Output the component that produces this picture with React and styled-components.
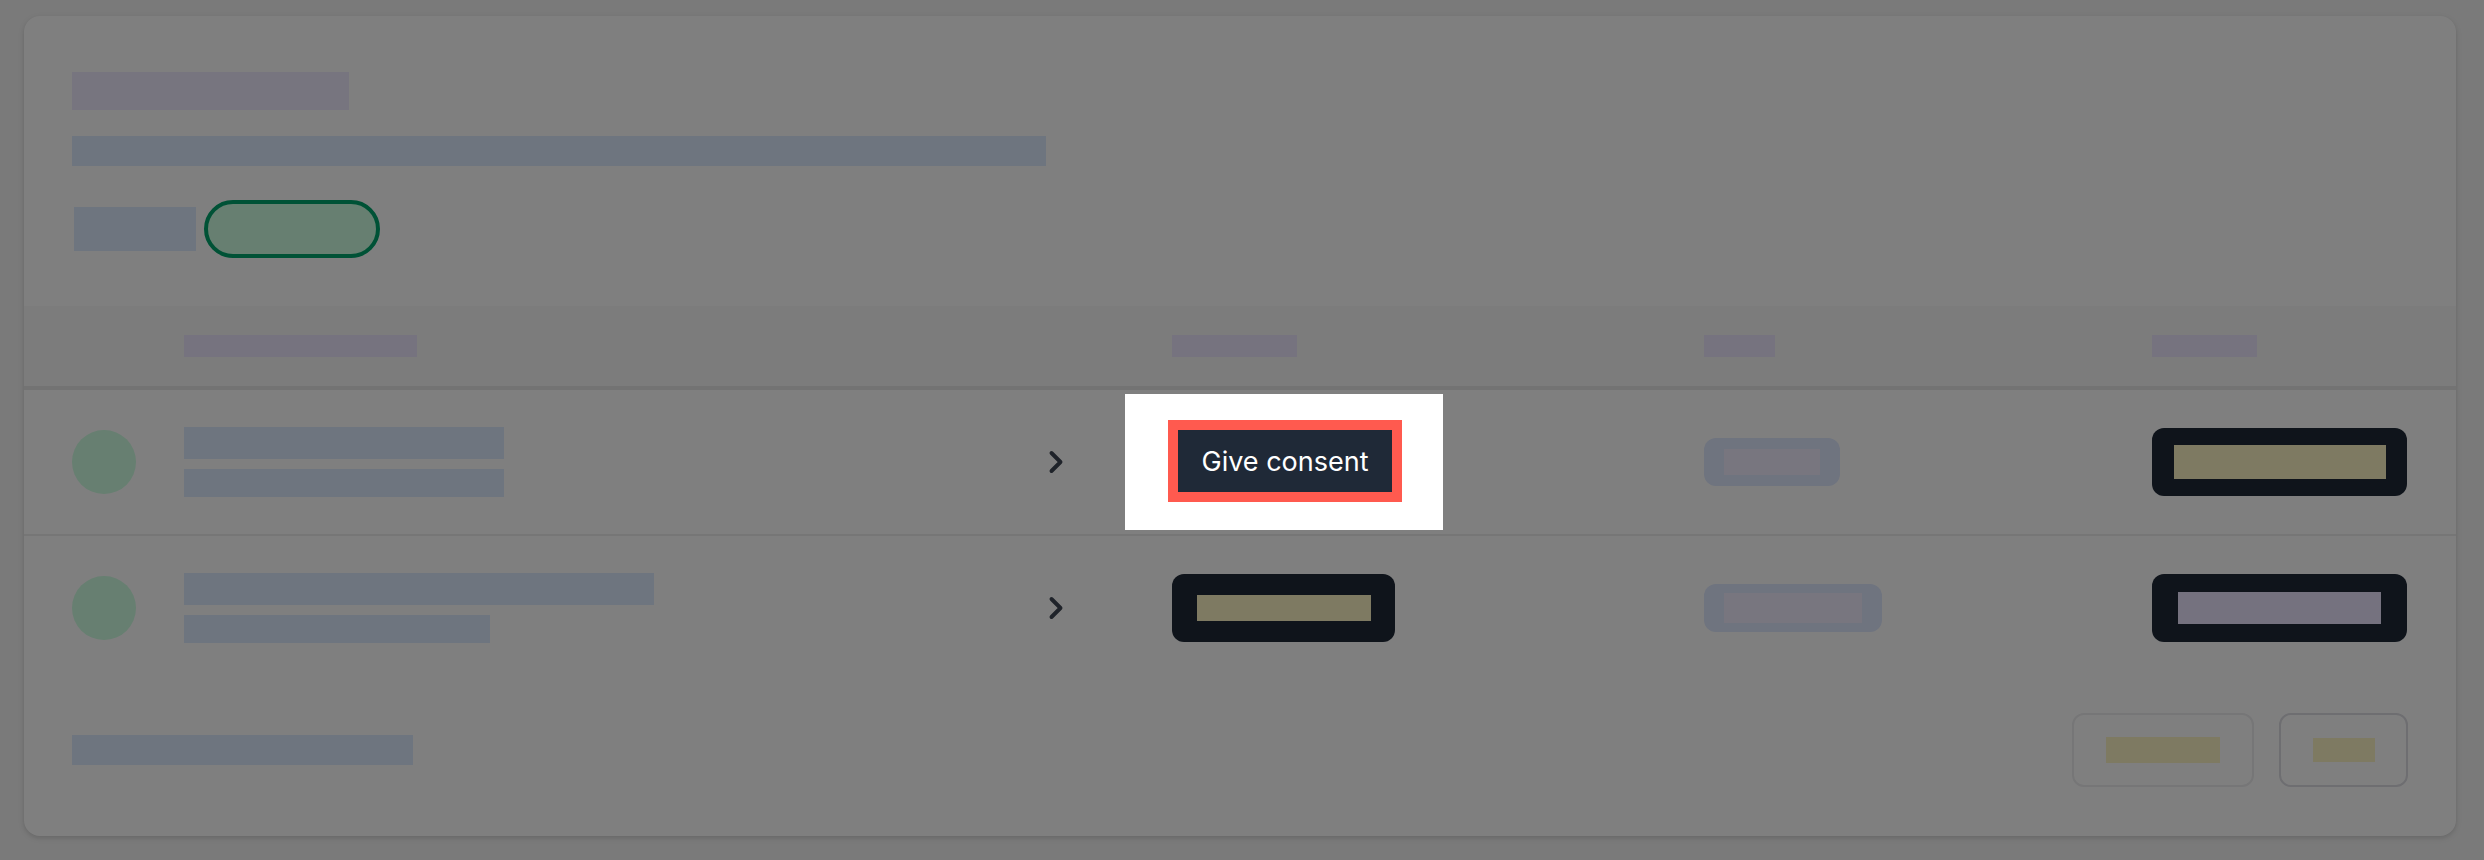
import React from "react";
import styled, { createGlobalStyle, css } from "styled-components";
import { ChevronRight } from "lucide-react";

const GlobalStyle = createGlobalStyle`
  * { box-sizing: border-box; }
  html, body {
    margin: 0;
    background: #f4f4f4;
    font-family: Inter, "Noto Sans", sans-serif;
  }
`;

const Page = styled.div`
  padding: 16px 28px 24px 24px;
  min-height: 860px;
`;

const Card = styled.section`
  background: #fff;
  border-radius: 16px;
  box-shadow: 0 2px 6px rgba(0, 0, 0, 0.1), 0 2px 4px rgba(0, 0, 0, 0.06);
`;

// redacted text is drawn as a flat block
const Redact = styled.span`
  display: block;
  flex-shrink: 0;
  width: ${({ $w }) => $w}px;
  height: ${({ $h }) => $h}px;
  background: ${({ $c }) => $c};
`;

const Top = styled.div`
  display: flex;
  flex-direction: column;
  align-items: flex-start;
  padding: 56px 48px 48px;
`;

const Subtitle = styled(Redact)`
  margin-top: 26px;
`;

const MetaRow = styled.div`
  display: flex;
  align-items: center;
  gap: 8px;
  margin-top: 34px;
`;

const MetaLabel = styled(Redact)`
  margin-left: 2px;
`;

const Pill = styled.span`
  display: block;
  width: 176px;
  height: 58px;
  border-radius: 999px;
  border: 4px solid #00a46c;
  background: #cefee2;
`;

const gridCols = css`
  display: grid;
  grid-template-columns: 112px 854px 134px 532px 448px 1fr;
  align-items: center;
  padding: 0 48px;
`;

const HeadRow = styled.div`
  ${gridCols};
  height: 84px;
  background: #f8f8f8;
  border-bottom: 4px solid #e6e6e6;
`;

const Row = styled.div`
  ${gridCols};
  height: ${({ $last }) => ($last ? 144 : 146)}px;
  border-bottom: ${({ $last }) => ($last ? "none" : "2px solid #ededed")};
`;

const Avatar = styled.span`
  display: block;
  width: 64px;
  height: 64px;
  border-radius: 50%;
  background: #cefee2;
`;

const NameCell = styled.div`
  display: flex;
  flex-direction: column;
  gap: 10px;
`;

const Chevron = styled(ChevronRight)`
  display: block;
  color: #3f4754;
`;

const DarkButton = styled.button`
  display: inline-flex;
  align-items: center;
  justify-content: center;
  width: ${({ $w }) => $w}px;
  height: 68px;
  padding: 0;
  border: none;
  border-radius: 12px;
  background: #1f2937;
`;

const Badge = styled.span`
  display: inline-flex;
  align-items: center;
  height: 48px;
  padding: 0 20px;
  border-radius: 12px;
  background: #dee8ff;
  justify-self: start;
`;

const Spotlight = styled.div`
  position: relative;
  z-index: 10;
  justify-self: start;
  margin-left: -47px;
  padding: 36px 51px 38px 53px;
  background: #fff;
  box-shadow: 0 0 0 4000px rgba(0, 0, 0, 0.5);
`;

const ConsentButton = styled.button`
  display: flex;
  align-items: center;
  justify-content: center;
  width: 214px;
  height: 62px;
  padding: 0;
  border: none;
  border-radius: 0;
  outline: 10px solid #ff5a4f;
  background: #1f2937;
  color: #fff;
  font-family: Inter, "Noto Sans", sans-serif;
  font-size: 27px;
  font-weight: 400;
  white-space: nowrap;
`;

const Footer = styled.div`
  display: flex;
  align-items: center;
  justify-content: space-between;
  padding: 33px 48px 49px;
`;

const Pager = styled.div`
  display: flex;
  gap: 25px;
`;

const PageButton = styled.button`
  display: flex;
  align-items: center;
  justify-content: center;
  width: ${({ $w }) => $w}px;
  height: 74px;
  padding: 0;
  border: 2px solid ${({ disabled }) => (disabled ? "#ececee" : "#dcdce2")};
  border-radius: 12px;
  background: #fff;
`;

const YELLOW = "#fcf4c4";
const LILAC = "#eae4ff";
const HEAD = "#ece6ff";
const TEXT = "#dceaff";

const rows = [
  {
    id: 1,
    name: [320, 320],
    consent: null,
    badge: { w: 96, h: 26 },
    action: { w: 212, h: 34, c: YELLOW },
  },
  {
    id: 2,
    name: [470, 306],
    consent: { w: 174, h: 26 },
    badge: { w: 138, h: 30 },
    action: { w: 203, h: 32, c: LILAC },
  },
];

export default function App() {
  return (
    <>
      <GlobalStyle />
      <Page>
        <Card>
          <Top>
            <Redact $w={277} $h={38} $c="#eeeaff" />
            <Subtitle $w={974} $h={30} $c={TEXT} />
            <MetaRow>
              <MetaLabel $w={122} $h={44} $c={TEXT} />
              <Pill />
            </MetaRow>
          </Top>

          <HeadRow>
            <span />
            <Redact $w={233} $h={22} $c={HEAD} />
            <span />
            <Redact $w={125} $h={22} $c={HEAD} />
            <Redact $w={71} $h={22} $c={HEAD} />
            <Redact $w={105} $h={22} $c={HEAD} />
          </HeadRow>

          {rows.map((r, i) => (
            <Row key={r.id} $last={i === rows.length - 1}>
              <Avatar />
              <NameCell>
                <Redact $w={r.name[0]} $h={32} $c={TEXT} />
                <Redact $w={r.name[1]} $h={28} $c={TEXT} />
              </NameCell>
              <Chevron size={36} strokeWidth={2.6} />
              {r.consent ? (
                <DarkButton $w={223}>
                  <Redact $w={r.consent.w} $h={r.consent.h} $c={YELLOW} />
                </DarkButton>
              ) : (
                <Spotlight>
                  <ConsentButton>Give consent</ConsentButton>
                </Spotlight>
              )}
              <Badge>
                <Redact $w={r.badge.w} $h={r.badge.h} $c="#f0ecff" />
              </Badge>
              <DarkButton $w={255}>
                <Redact $w={r.action.w} $h={r.action.h} $c={r.action.c} />
              </DarkButton>
            </Row>
          ))}

          <Footer>
            <Redact $w={341} $h={30} $c={TEXT} />
            <Pager>
              <PageButton $w={182} disabled>
                <Redact $w={114} $h={26} $c={YELLOW} />
              </PageButton>
              <PageButton $w={129}>
                <Redact $w={62} $h={24} $c={YELLOW} />
              </PageButton>
            </Pager>
          </Footer>
        </Card>
      </Page>
    </>
  );
}
